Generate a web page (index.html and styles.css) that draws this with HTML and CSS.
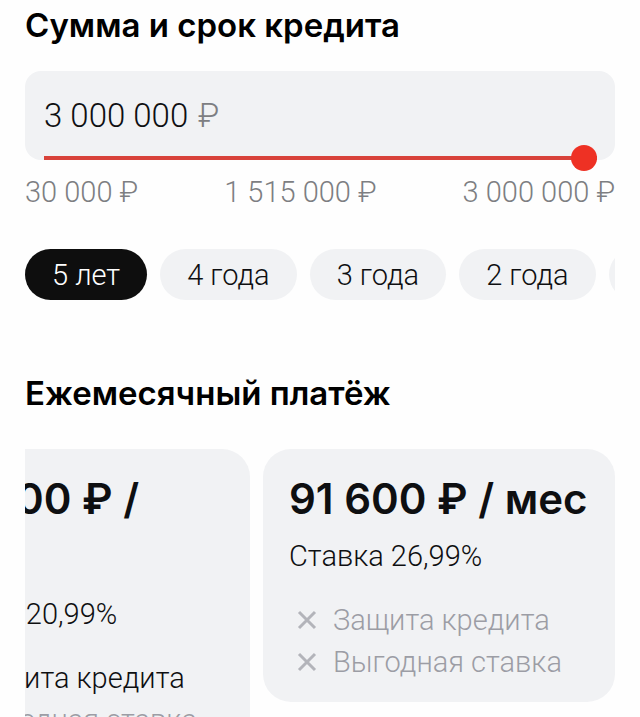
FILE: index.html
```html
<!DOCTYPE html>
<html lang="ru">
<head>
<meta charset="utf-8">
<meta name="viewport" content="width=device-width, initial-scale=1">
<title>Сумма и срок кредита</title>
<link rel="stylesheet" href="styles.css">
</head>
<body>
<main class="page">
  <section class="amount">
    <h2 class="title"><label for="amount">Сумма и срок кредита</label></h2>
    <div class="field">
      <input class="field-input" id="amount" type="text" inputmode="numeric" value="3 000 000">
      <span class="field-unit">₽</span>
    </div>
    <input class="slider" type="range" min="30000" max="3000000" value="3000000" aria-label="Сумма кредита">
    <div class="scale">
      <span>30 000 ₽</span>
      <span>1 515 000 ₽</span>
      <span>3 000 000 ₽</span>
    </div>
    <div class="terms">
      <button class="term term-active" type="button">5 лет</button>
      <button class="term" type="button">4 года</button>
      <button class="term" type="button">3 года</button>
      <button class="term" type="button">2 года</button>
      <button class="term" type="button">1 год</button>
    </div>
  </section>

  <section class="payment">
    <h2 class="title">Ежемесячный платёж</h2>
    <div class="offers">
      <article class="offer">
        <p class="price">80 900 ₽ / мес</p>
        <p class="rate">Ставка 20,99%</p>
        <ul class="features">
          <li class="feature feature-on">
            <svg class="mark" viewBox="0 0 20 20"><path d="M2 10l6 6L18 4"/></svg>
            Защита кредита
          </li>
          <li class="feature">
            <svg class="mark" viewBox="0 0 20 20"><path d="M2 2l16 16M18 2L2 18"/></svg>
            Выгодная ставка
          </li>
        </ul>
      </article>
      <article class="offer">
        <p class="price">91 600 ₽ / мес</p>
        <p class="rate">Ставка 26,99%</p>
        <ul class="features">
          <li class="feature">
            <svg class="mark" viewBox="0 0 20 20"><path d="M2 2l16 16M18 2L2 18"/></svg>
            Защита кредита
          </li>
          <li class="feature">
            <svg class="mark" viewBox="0 0 20 20"><path d="M2 2l16 16M18 2L2 18"/></svg>
            Выгодная ставка
          </li>
        </ul>
      </article>
    </div>
  </section>
</main>
</body>
</html>
```
FILE: styles.css
```css
* {
  box-sizing: border-box;
}

body {
  margin: 0;
  overflow: hidden;
  background: #fefefe;
  color: #0e0f11;
  font-family: Roboto, "Liberation Sans", sans-serif;
  font-size: 29px;
  font-weight: 300;
  line-height: 40px;
}

.page {
  padding: 5px 25px 0;
}

.title {
  margin: 0;
  color: #000;
  font-family: Inter, Roboto, sans-serif;
  font-size: 33px;
  font-weight: 600;
  line-height: 40px;
}

.field {
  display: flex;
  align-items: center;
  gap: 7px;
  height: 89px;
  margin-top: 26px;
  padding: 0 19px;
  border-radius: 16px;
  background: #f1f2f4;
  font-size: 33px;
}

.field-input {
  width: 147px;
  padding: 0;
  border: 0;
  outline: 0;
  background: none;
  color: inherit;
  font: inherit;
}

.field-unit {
  color: #7d7e82;
}

.slider {
  display: block;
  width: calc(100% - 37px);
  height: 26px;
  margin: -15px 18px 0 19px;
  appearance: none;
  background: linear-gradient(#d8423a, #d8423a) center / 100% 4px no-repeat;
}

.slider::-webkit-slider-thumb {
  appearance: none;
  width: 26px;
  height: 26px;
  border-radius: 50%;
  background: #ee3124;
}

.scale {
  display: flex;
  justify-content: space-between;
  margin-top: 1px;
  color: #7d7e82;
}

.terms {
  display: flex;
  gap: 13px;
  margin-top: 37px;
  overflow: hidden;
}

.term {
  flex: none;
  height: 51px;
  padding: 0 27px;
  border: 0;
  border-radius: 26px;
  background: #f1f2f4;
  color: inherit;
  font: inherit;
}

.term-active {
  background: #0e0e0e;
  color: #fff;
}

.payment {
  margin-top: 73px;
}

.offers {
  display: flex;
  align-items: flex-start;
  justify-content: flex-end;
  gap: 13px;
  margin-top: 36px;
  overflow: hidden;
}

.offer {
  flex: none;
  width: 352px;
  padding: 21px 26px 19px;
  border-radius: 28px;
  background: #f1f2f4;
}

.price {
  margin: 0;
  font-family: Inter, Roboto, sans-serif;
  font-size: 42px;
  font-weight: 600;
  line-height: 58px;
}

.rate {
  margin: 8px 0 0;
}

.features {
  margin: 23px 0 0;
  padding: 0;
  list-style: none;
}

.feature {
  display: flex;
  align-items: center;
  gap: 16px;
  height: 42px;
  padding-left: 8px;
  color: #9c9da5;
  white-space: nowrap;
}

.feature-on {
  color: inherit;
}

.mark {
  width: 20px;
  height: 20px;
  fill: none;
  stroke: #b3b4ba;
  stroke-width: 3;
}

.feature-on .mark {
  stroke: #0e0f11;
}
```
